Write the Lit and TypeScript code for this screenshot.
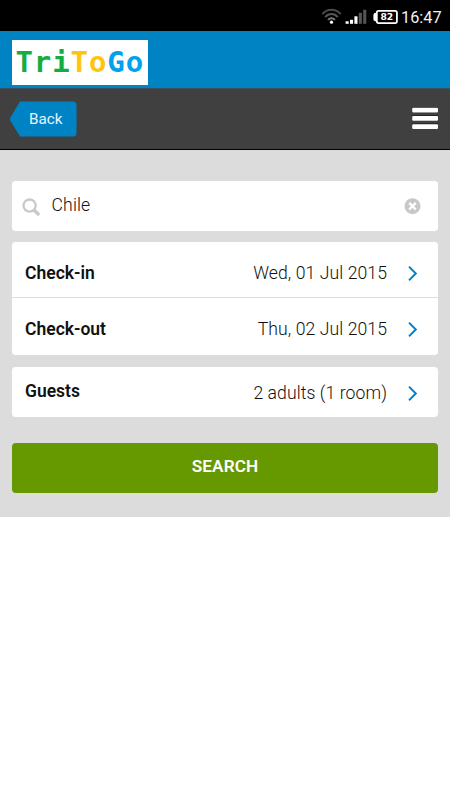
import { LitElement, html, css, svg } from "lit";
import { customElement, property } from "lit/decorators.js";

@customElement("form-row")
class FormRow extends LitElement {
  @property() label = "";
  @property() value = "";

  static styles = css`
    :host { display: flex; align-items: center; box-sizing: border-box; padding: 0 20px 0 13px; }
    .label { flex: 1; font-weight: 600; font-size: 17.5px; line-height: 20px; letter-spacing: 0; color: #111; padding-bottom: var(--label-lift, 0px); }
    .value { font-weight: 300; font-size: 17.6px; line-height: 20px; letter-spacing: 0.08px; color: #111; margin-right: 20px; white-space: nowrap; }
    .arrow { width: 11px; height: 17px; display: block; margin-top: 1px; }
  `;

  render() {
    return html`
      <span class="label">${this.label}</span>
      <span class="value">${this.value}</span>
      <svg class="arrow" viewBox="0 0 11 17">
        <path d="M2 1.6 L8.8 8.5 L2 15.4" fill="none" stroke="#0083c4" stroke-width="2" />
      </svg>
    `;
  }
}

@customElement("app-root")
class AppRoot extends LitElement {
  static styles = css`
    :host { display: block; width: 450px; height: 800px; overflow: hidden; background: #fff; font-family: Roboto, sans-serif; }
    .status { height: 31px; background: #000; display: flex; align-items: center; justify-content: flex-end; padding-right: 8px; box-sizing: border-box; color: #f2f2f2; }
    .icons { width: 80px; height: 31px; display: block; }
    .level { font: bold 9.5px "DejaVu Sans", sans-serif; }
    .clock { font-size: 16.3px; line-height: 31px; margin-top: 3px; width: 41px; white-space: nowrap; }
    .brand { height: 57px; background: #0083c3; box-sizing: border-box; padding: 9px 12px 0; }
    .logo { width: 136px; height: 45px; background: #fff; font: bold 29px/44px "DejaVu Sans Mono", monospace; letter-spacing: 0.9px; padding-left: 3.5px; box-sizing: border-box; white-space: nowrap; }
    .g { color: #13ad43; }
    .y { color: #ffc40d; }
    .b { color: #00a2f0; }
    .nav { height: 62px; background: #404040; border-top: 1px solid #3a5160; border-bottom: 1px solid #000; box-sizing: border-box; display: flex; align-items: center; justify-content: space-between; padding: 0 11px 0 10px; }
    .back { position: relative; width: 67px; height: 36px; }
    .shape { display: block; width: 67px; height: 36px; }
    .backtext { position: absolute; left: 19px; top: 0; line-height: 36px; font-size: 15.2px; color: #e8f4fb; }
    .menu { width: 28px; height: 24px; display: block; }
    .panel { height: 367px; background: #dcdcdc; box-sizing: border-box; padding: 31px 12px 0; }
    .card { background: #fff; border-radius: 4px; box-shadow: 0 0 1px #ececec; }
    .place { height: 50px; display: flex; align-items: center; padding: 0 17px 0 10px; box-sizing: border-box; }
    .glass { width: 19px; height: 19px; margin-top: 2px; }
    .query { flex: 1; font-weight: 300; font-size: 17.6px; letter-spacing: 0.15px; margin-left: 10.5px; padding-bottom: 3px; color: #111; }
    .clear { width: 17px; height: 17px; }
    .dates { margin-top: 11.4px; height: 112.6px; }
    .checkin { height: 56px; border-bottom: 1px solid #dedede; padding-top: 6px; }
    .checkout { height: 56.6px; padding-top: 4px; }
    .guests { margin-top: 12.4px; height: 50px; }
    .guestrow { height: 50px; padding-top: 1px; --label-lift: 3px; }
    .search { display: block; width: 100%; height: 50px; margin-top: 25.2px; padding: 0 0 3px; border: none; border-radius: 4px; background: #669900; color: #fff; font: 600 17.2px Roboto, sans-serif; letter-spacing: 0.1px; box-sizing: border-box; }
  `;

  render() {
    const bars = [2.5, 4, 7.5, 11, 14];
    return html`
      <div class="status">
        <svg class="icons" viewBox="321 0 80 31">
          <g fill="none" stroke="#4b4b4b" stroke-width="2">
            <path d="M322.3 14.2 C327.2 8.4 335.8 8.4 340.7 14.2" />
            <path d="M325.2 17.1 C328.4 13.1 334.6 13.1 337.8 17.1" stroke="#555" />
            <path d="M328.1 20 C329.8 17.6 333.2 17.6 334.9 20" stroke="#777" />
          </g>
          <circle cx="331.5" cy="22.2" r="1.6" fill="#fff" />
          ${bars.map((h, i) => svg`<rect x=${345.6 + i * 4.4} y=${23.8 - h} width="3.1" height=${h} fill=${i < 3 ? "#fff" : "#555"} />`)}
          <rect x="376.8" y="10.9" width="20.1" height="12.2" rx="1.8" fill="none" stroke="#fff" stroke-width="1.8" />
          <path d="M376.5 12.5 Q373.4 13 373.4 14.7 V19.2 Q373.4 21 376.5 21.5 Z" fill="#fff" />
          <text class="level" x="380.4" y="20.4" fill="#fff" textLength="12.8" lengthAdjust="spacingAndGlyphs">82</text>
        </svg>
        <span class="clock">16:47</span>
      </div>
      <div class="brand">
        <div class="logo"><span class="g">Tri</span><span class="y">To</span><span class="b">Go</span></div>
      </div>
      <div class="nav">
        <div class="back">
          <svg class="shape" viewBox="0 0 67 36">
            <path d="M10 0.5 H63 Q66.5 0.5 66.5 4 V32 Q66.5 35.5 63 35.5 H10 L0.3 19.5 Q-0.3 18 0.3 16.7 Z" fill="#0083c4" />
          </svg>
          <span class="backtext">Back</span>
        </div>
        <svg class="menu" viewBox="0 0 28 24">
          <path d="M1 2.8 H27 M1 11 H27 M1 19.2 H27" stroke="#262626" stroke-width="5.8" />
          <g fill="#fff">
            <rect x="1.2" y="0.7" width="25.8" height="4.7" rx="1" />
            <rect x="1.2" y="9" width="25.8" height="4.7" rx="1" />
            <rect x="1.2" y="17.2" width="25.8" height="4.7" rx="1" />
          </g>
        </svg>
      </div>
      <div class="panel">
        <div class="card place">
          <svg class="glass" viewBox="0 0 19 19">
            <circle cx="7.6" cy="7.6" r="6.1" fill="none" stroke="#c9c9c9" stroke-width="2.3" />
            <path d="M12 12 L17.2 17" stroke="#c9c9c9" stroke-width="3.2" />
          </svg>
          <span class="query">Chile</span>
          <svg class="clear" viewBox="0 0 17 17">
            <circle cx="8.5" cy="8.2" r="8" fill="#c8c8c8" />
            <path d="M5.2 4.9 L11.8 11.5 M11.8 4.9 L5.2 11.5" stroke="#fff" stroke-width="2.4" />
          </svg>
        </div>
        <div class="card dates">
          <form-row class="checkin" label="Check-in" value="Wed, 01 Jul 2015"></form-row>
          <form-row class="checkout" label="Check-out" value="Thu, 02 Jul 2015"></form-row>
        </div>
        <div class="card guests">
          <form-row class="guestrow" label="Guests" value="2 adults (1 room)"></form-row>
        </div>
        <button class="search">SEARCH</button>
      </div>
    `;
  }
}
